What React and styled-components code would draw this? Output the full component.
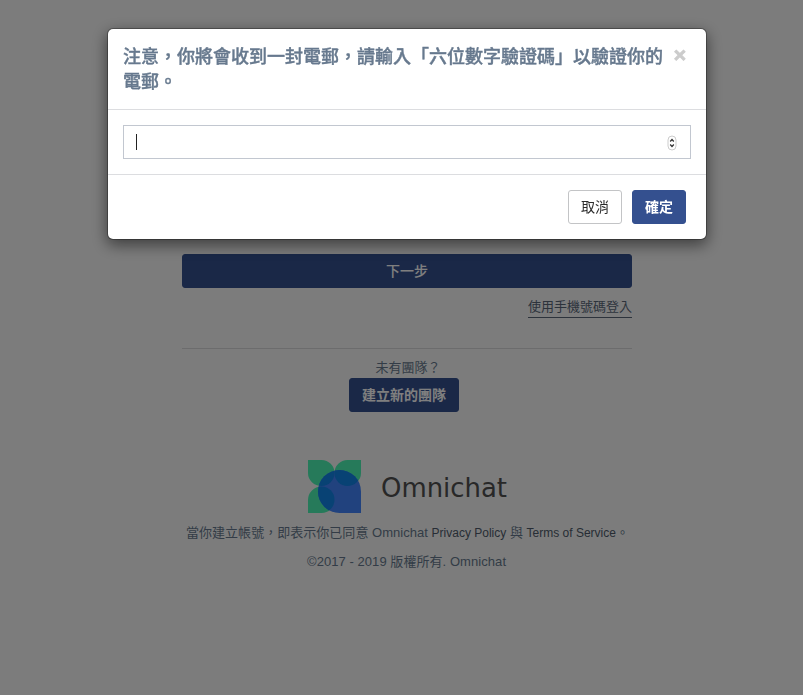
import React from "react";
import styled, { createGlobalStyle } from "styled-components";

const Global = createGlobalStyle`
  * { box-sizing: border-box; }
  html, body { margin: 0; height: 100%; overflow: hidden; }
  body {
    background: #f8f8f8;
    color: #67798e;
    font: 13px/20px "Liberation Sans", "Noto Sans CJK TC", sans-serif;
  }
`;

const Page = styled.main`
  width: 450px;
  margin: 0 0 0 182px;
  padding-top: 254px;
  display: flex;
  flex-direction: column;
`;

const Button = styled.button`
  height: 34px;
  padding: 0 12px;
  border: 1px solid ${(p) => (p.$plain ? "#c3c4c6" : "#34508f")};
  border-radius: 3px;
  background: ${(p) => (p.$plain ? "#fff" : "#34508f")};
  color: ${(p) => (p.$plain ? "#2b2b2b" : "#fff")};
  font-family: inherit;
  font-size: 14px;
  line-height: 20px;
  font-weight: ${(p) => (p.$plain ? 400 : p.$medium ? 500 : 700)};
  white-space: nowrap;
`;

const PhoneLink = styled.a`
  align-self: flex-end;
  margin-top: 10px;
  height: 20px;
  line-height: 17px;
  color: #5a6778;
  border-bottom: 1px solid #5a6778;
`;

const Divider = styled.hr`
  width: 100%;
  height: 1px;
  margin: 30px 0 9px;
  border: 0;
  background: #d8d8da;
`;

const SignUp = styled.section`
  display: flex;
  flex-direction: column;
  align-items: center;
  width: 444px;
`;

const Question = styled.p`
  margin: 0 0 0 8px;
`;

const Brand = styled.div`
  display: flex;
  margin: 48px 0 0 126px;
  gap: 20px;
`;

const Mark = styled.svg`
  display: block;
  width: 53px;
  height: 53px;
`;

const Wordmark = styled.svg`
  display: block;
  width: 128px;
  height: 53px;
  font-family: "DejaVu Sans", sans-serif;
  font-size: 26px;
  fill: #505050;
`;

const Legal = styled.p`
  margin: ${(p) => p.$top}px 0 0 ${(p) => p.$left}px;
  white-space: nowrap;
  letter-spacing: ${(p) => p.$tracking || 0}px;

  a { color: #4f5b6b; font-size: 12px; letter-spacing: 0; }
`;

const Backdrop = styled.div`
  position: fixed;
  inset: 0;
  background: rgba(0, 0, 0, 0.5);
`;

const Dialog = styled.section`
  position: absolute;
  top: 28px;
  left: 107px;
  width: 600px;
  border: 1px solid rgba(0, 0, 0, 0.3);
  border-radius: 6px;
  background: #fff;
  background-clip: padding-box;
  box-shadow: 0 5px 15px rgba(0, 0, 0, 0.5);
`;

const Header = styled.header`
  display: flex;
  justify-content: space-between;
  height: 81px;
  padding: 15px 20px 0 15px;
  border-bottom: 1px solid #dcdde0;
`;

const Title = styled.h4`
  margin: 1px 0 0;
  width: 545px;
  font-size: 18px;
  line-height: 25px;
  font-weight: 500;
  color: #67798e;
  -webkit-text-stroke: 0.4px #67798e;
`;

const Close = styled.button`
  padding: 0;
  border: 0;
  background: none;
  height: 21px;
  color: #ccc;
  font: 700 21px/20px "Liberation Sans", sans-serif;
  -webkit-text-stroke: 0.9px #ccc;
`;

const Body = styled.div`
  padding: 15px;
`;

const Field = styled.div`
  display: flex;
  align-items: center;
  justify-content: space-between;
  height: 34px;
  padding: 0 13px 0 12px;
  border: 1px solid #c2c7d0;
`;

const Caret = styled.span`
  width: 1px;
  height: 16px;
  background: #222;
`;

const Stepper = styled.svg`
  width: 10px;
  height: 16px;
  margin-top: 2px;
`;

const Footer = styled.footer`
  display: flex;
  justify-content: flex-end;
  gap: 10px;
  height: 65px;
  padding: 15px 20px;
  border-top: 1px solid #dcdde0;
`;

export default function App() {
  return (
    <>
      <Global />
      <Page>
        <Button $medium>下一步</Button>
        <PhoneLink>使用手機號碼登入</PhoneLink>
        <Divider />
        <SignUp>
          <Question>未有團隊？</Question>
          <Button>建立新的團隊</Button>
        </SignUp>
        <Brand>
          <Mark viewBox="0 0 53 53" aria-hidden="true">
            <g fill="#4cf4b4">
              <path d="M0 0H13.5A13 13 0 0 1 26.5 13A13 13 0 0 1 13.5 26A13.5 13 0 0 1 0 13Z" />
              <path d="M53 0H39.5A13 13 0 0 0 26.5 13A13 13 0 0 0 39.5 26A13.5 13 0 0 0 53 13Z" />
              <path d="M0 53V40A13.5 13.5 0 0 1 13.5 26.5A13 13 0 0 1 26.5 40A13 13 0 0 1 13.5 53Z" />
            </g>
            <defs>
              <clipPath id="drop">
                <path d="M53 53H31.5A21.5 21.5 0 1 1 53 31.5Z" />
              </clipPath>
            </defs>
            <path d="M53 53H31.5A21.5 21.5 0 1 1 53 31.5Z" fill="#4284fc" />
            <g fill="#1084e8" clipPath="url(#drop)">
              <ellipse cx="13.5" cy="13" rx="13" ry="13" />
              <ellipse cx="39.5" cy="13" rx="13" ry="13" />
              <ellipse cx="13.5" cy="39.7" rx="13" ry="13.3" />
            </g>
          </Mark>
          <Wordmark>
            <text x="0" y="37" textLength="126" lengthAdjust="spacingAndGlyphs">Omnichat</text>
          </Wordmark>
        </Brand>
        <Legal $top={10} $left={4} $tracking={0.03}>
          當你建立帳號，即表示你已同意 Omnichat <a>Privacy Policy</a> 與 <a>Terms of Service</a>。
        </Legal>
        <Legal $top={9} $left={125} $tracking={0.06}>©2017 - 2019 版權所有. Omnichat</Legal>
      </Page>
      <Backdrop>
        <Dialog role="dialog">
          <Header>
            <Title>注意，你將會收到一封電郵，請輸入「六位數字驗證碼」以驗證你的電郵。</Title>
            <Close>×</Close>
          </Header>
          <Body>
            <Field>
              <Caret />
              <Stepper viewBox="0 0 10 16" fill="none">
                <rect x="1" y="1" width="8" height="14" rx="4" fill="#fff" stroke="#ccc" />
                <path d="M3.2 6.5L5 4.5L6.8 6.5M3.2 9.5L5 11.5L6.8 9.5" stroke="#333" strokeWidth="1.3" />
              </Stepper>
            </Field>
          </Body>
          <Footer>
            <Button $plain>取消</Button>
            <Button>確定</Button>
          </Footer>
        </Dialog>
      </Backdrop>
    </>
  );
}
